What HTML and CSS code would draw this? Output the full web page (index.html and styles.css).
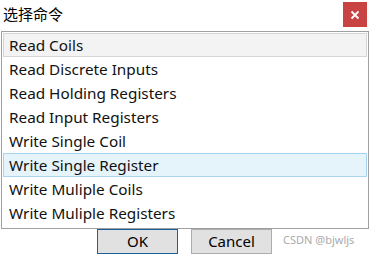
FILE: index.html
```html
<!DOCTYPE html>
<html lang="zh">
<head>
<meta charset="utf-8">
<link rel="stylesheet" href="styles.css">
</head>
<body>
<div class="dialog">
  <div class="titlebar">
    <span class="title">选择命令</span>
    <span class="close"><svg width="10" height="10" viewBox="0 0 10 10"><path d="M1.5 1.5 L8.5 8.5 M8.5 1.5 L1.5 8.5" stroke="#fff" stroke-width="1.8" fill="none"/></svg></span>
  </div>
  <div class="list">
    <div class="item item-first">Read Coils</div>
    <div class="item">Read Discrete Inputs</div>
    <div class="item">Read Holding Registers</div>
    <div class="item">Read Input Registers</div>
    <div class="item">Write Single Coil</div>
    <div class="item item-hover">Write Single Register</div>
    <div class="item">Write Muliple Coils</div>
    <div class="item">Write Muliple Registers</div>
  </div>
  <div class="buttons">
    <span class="btn btn-ok">OK</span>
    <span class="btn">Cancel</span>
    <span class="watermark">CSDN @bjwljs</span>
  </div>
</div>
</body>
</html>
```
FILE: styles.css
```css
html, body {
  margin: 0;
  padding: 0;
  background: #fff;
}
body {
  width: 369px;
  height: 254px;
  overflow: hidden;
  font-family: "Noto Sans", "Noto Sans CJK SC", sans-serif;
  color: #000;
}
.dialog {
  display: flex;
  flex-direction: column;
  height: 254px;
}
.titlebar {
  height: 31px;
  display: flex;
  align-items: center;
  justify-content: space-between;
  padding: 0 2px 0 3px;
}
.title {
  font-family: "Noto Sans CJK SC", sans-serif;
  font-size: 15px;
  line-height: 20px;
  margin-top: -2px;
}
.close {
  width: 24px;
  height: 25px;
  background: #c94343;
  display: flex;
  align-items: center;
  justify-content: center;
  margin-top: -1px;
}
.list {
  margin-left: 1px;
  width: 364px;
  height: 196px;
  border: 1px solid #a0a0a0;
  padding: 1px 1px 0 1px;
  box-sizing: content-box;
}
.item {
  height: 24px;
  box-sizing: border-box;
  padding-left: 5px;
  font-size: 15.3px;
  line-height: 23px;
  border: 1px solid transparent;
  white-space: nowrap;
  color: #111;
}
.item-first {
  background: #f3f3f3;
  border-color: #d6d6d6;
}
.item-hover {
  background: #e5f3fb;
  border-color: #a9d3ee;
}
.buttons {
  display: flex;
  align-items: flex-start;
  padding-left: 97px;
  gap: 13px;
}
.btn {
  width: 81px;
  height: 25px;
  box-sizing: border-box;
  background: #e1e1e1;
  border: 1px solid #adadad;
  font-size: 15px;
  line-height: 23px;
  text-align: center;
}
.btn-ok {
  border: 1px solid #1c5f9e;
}
.watermark {
  font-size: 11px;
  color: #aaaaaa;
  line-height: 20px;
  margin-left: -2px;
  margin-top: 1px;
}
```
